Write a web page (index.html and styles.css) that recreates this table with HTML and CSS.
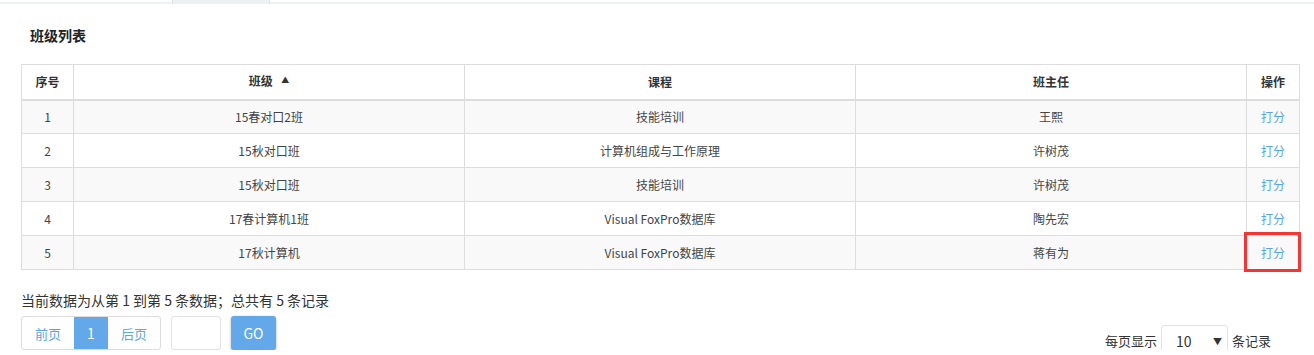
FILE: index.html
```html
<!DOCTYPE html>
<html lang="zh-CN">
<head>
<meta charset="utf-8">
<title>班级列表</title>
<link rel="stylesheet" href="styles.css">
</head>
<body>
<div class="topbar"><div class="tab"></div></div>
<div class="content">
  <h3 class="title">班级列表</h3>
  <table class="grid">
    <colgroup>
      <col class="c-no"><col class="c-wide"><col class="c-wide"><col class="c-wide"><col class="c-op">
    </colgroup>
    <thead>
      <tr><th>序号</th><th>班级 <span class="sort">▲</span></th><th>课程</th><th>班主任</th><th>操作</th></tr>
    </thead>
    <tbody>
      <tr><td>1</td><td>15春对口2班</td><td>技能培训</td><td>王熙</td><td><a class="link">打分</a></td></tr>
      <tr><td>2</td><td>15秋对口班</td><td>计算机组成与工作原理</td><td>许树茂</td><td><a class="link">打分</a></td></tr>
      <tr><td>3</td><td>15秋对口班</td><td>技能培训</td><td>许树茂</td><td><a class="link">打分</a></td></tr>
      <tr><td>4</td><td>17春计算机1班</td><td>Visual FoxPro数据库</td><td>陶先宏</td><td><a class="link">打分</a></td></tr>
      <tr><td>5</td><td>17秋计算机</td><td>Visual FoxPro数据库</td><td>蒋有为</td><td class="marked"><a class="link">打分</a><span class="redbox"></span></td></tr>
    </tbody>
  </table>
  <div class="footer">
    <div class="left">
      <p class="info">当前数据为从第 1 到第 5 条数据；总共有 5 条记录</p>
      <div class="pager">
        <div class="pages">
          <a class="pg">前页</a><a class="pg active">1</a><a class="pg">后页</a>
        </div>
        <input class="jump" type="text">
        <button class="go">GO</button>
      </div>
    </div>
    <div class="right">
      <span>每页显示</span>
      <div class="select"><span>10</span><span class="caret">▼</span></div>
      <span>条记录</span>
    </div>
  </div>
</div>
</body>
</html>
```
FILE: styles.css
```css
* { box-sizing: border-box; }
body {
  margin: 0;
  font-family: "Noto Sans CJK SC", "Noto Sans", sans-serif;
  font-size: 12px;
  color: #333;
  background: #fff;
}
.topbar {
  height: 4px;
  border-bottom: 2px solid #eef1f1;
  position: relative;
}
.tab {
  position: absolute;
  left: 172px;
  top: 0;
  width: 98px;
  height: 4px;
  background: #eef1f1;
  border-left: 1px solid #dde2e2;
  border-right: 1px solid #dde2e2;
}
.content {
  padding: 0 15px 0 21px;
}
.title {
  margin: 0;
  padding: 19px 0 0 9px;
  height: 60px;
  font-size: 14px;
  font-weight: bold;
  line-height: 24px;
  color: #222;
}
.grid {
  width: 1278px;
  border-collapse: collapse;
  table-layout: fixed;
}
.c-no { width: 52px; }
.c-wide { width: 391px; }
.c-op { width: 53px; }
.grid th, .grid td {
  border: 1px solid #dddddd;
  text-align: center;
  padding: 0;
  line-height: 20px;
}
.grid th {
  height: 35px;
  font-weight: bold;
  color: #333;
  border-bottom: 2px solid #dddddd;
}
.grid td {
  height: 34px;
  color: #444;
}
.grid tbody tr:nth-child(odd) td { background: #f9f9f9; }
.sort {
  font-size: 8px;
  margin-left: 6px;
  position: relative;
  top: -3px;
}
.link { color: #5ba5e6; cursor: pointer; }
.marked { position: relative; }
.redbox {
  position: absolute;
  left: -3px;
  top: -4px;
  right: -2px;
  bottom: -3px;
  border: 3px solid #f23535;
}
.footer {
  display: flex;
  justify-content: space-between;
  align-items: flex-end;
  padding-top: 19px;
  width: 1278px;
}
.info {
  margin: 0 0 5px;
  font-size: 14px;
  line-height: 22px;
  color: #333;
}
.pager {
  display: flex;
  align-items: center;
  gap: 10px;
}
.pages {
  display: flex;
  height: 34px;
  border: 1px solid #dddddd;
  border-radius: 3px;
  overflow: hidden;
}
.pg {
  display: flex;
  align-items: center;
  justify-content: center;
  font-size: 13px;
  color: #5ba5e6;
  width: 52px;
}
.pg + .pg { border-left: 1px solid #dddddd; }
.pg.active {
  width: 34px;
  background: #63a9ea;
  color: #fff;
  border-left: none;
  font-size: 14px;
}
.pg.active + .pg { border-left: none; }
.jump {
  width: 50px;
  height: 34px;
  border: 1px solid #e2e2e2;
  border-radius: 3px;
  margin: 0;
}
.go {
  width: 45px;
  height: 34px;
  margin-left: 0;
  border: none;
  border-radius: 3px;
  background: #63a9ea;
  color: #fff;
  font-family: "Noto Sans CJK SC", "Noto Sans", sans-serif;
  font-size: 14px;
  box-shadow: 0 1px 3px rgba(0,0,0,0.3);
}
.right {
  display: flex;
  align-items: center;
  gap: 4px;
  font-size: 13px;
  margin-bottom: -5px;
  margin-right: 28px;
}
.select {
  display: flex;
  align-items: center;
  justify-content: space-between;
  width: 67px;
  height: 30px;
  border: 1px solid #e2e2e2;
  border-radius: 3px;
  padding: 2px 5px 0 14px;
  font-size: 14px;
  color: #333;
}
.caret { font-size: 9px; color: #333; }
```
